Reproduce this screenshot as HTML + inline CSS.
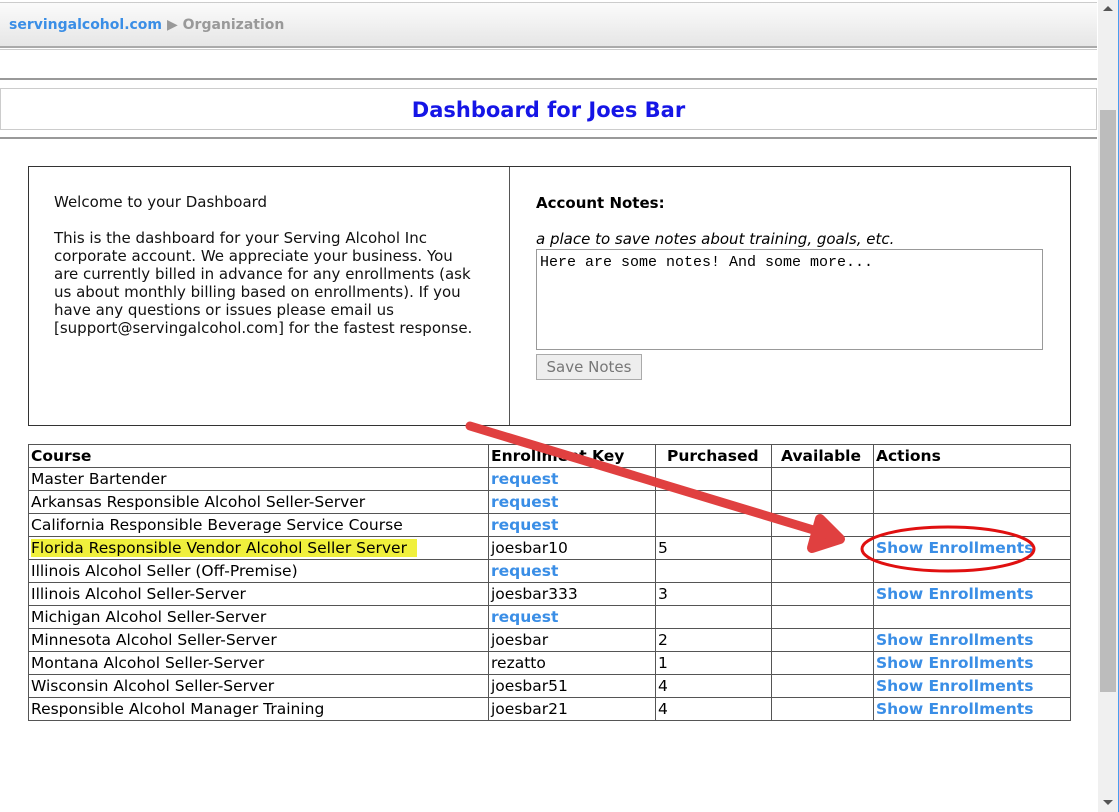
<!DOCTYPE html>
<html><head><style>
body{margin:0;width:1119px;height:812px;overflow:hidden;background:#fff;font-family:"DejaVu Sans","Liberation Sans",sans-serif;position:relative}
.bar{position:absolute;left:0;top:2px;width:1097px;height:43px;background:linear-gradient(#fbfbfb,#e6e6e6);border-bottom:2px solid #aaa;border-top:1px solid #ccc}
.bar span{position:absolute;top:14px;font-size:14px;font-weight:bold}
.sb{position:absolute;left:1098px;top:0;width:20px;height:812px;background:#f0f0f0;border-right:1px solid #4a9cf0}
.thumb{position:absolute;left:2px;top:110px;width:16px;height:582px;background:#bcbcbc}
.ln{position:absolute;left:0;width:1097px;border-top:1px solid #ccc}
.box{position:absolute;left:28px;top:166px;width:1041px;height:258px;border:1px solid #333}
table{position:absolute;left:28px;top:444px;border-collapse:collapse;font-size:15.5px;width:1043px;table-layout:fixed}
td,th{border:1px solid #555;height:22px;padding:0 0 0 2px;text-align:left;white-space:nowrap;overflow:visible}
th{font-weight:bold}
a{color:#3a8ee6;font-weight:bold;text-decoration:none}
</style></head><body>
<div class="bar"><span style="left:9px;color:#3a8ee6">servingalcohol.com</span><span style="left:167px;color:#999">▶ Organization</span></div>
<div class="ln" style="top:49px"></div>
<div class="ln" style="top:78px;border-top:2px solid #999"></div>
<div style="position:absolute;left:0;top:88px;width:1095px;height:40px;border:1px solid #ccc;text-align:center;font-size:21px;font-weight:bold;color:#1515e6;line-height:42px">Dashboard for Joes Bar</div>
<div class="ln" style="top:137px;border-top:2px solid #999"></div>
<div class="box">
<div style="position:absolute;left:480px;top:0;height:258px;border-left:1px solid #555"></div>
<div style="position:absolute;left:25px;top:26px;width:425px;font-size:15px;line-height:18px;color:#111">Welcome to your Dashboard<br><br>This is the dashboard for your Serving Alcohol Inc corporate account. We appreciate your business. You are currently billed in advance for any enrollments (ask us about monthly billing based on enrollments). If you have any questions or issues please email us [support@servingalcohol.com] for the fastest response.</div>
<div style="position:absolute;left:507px;top:27px;font-size:15px;font-weight:bold">Account Notes:</div>
<div style="position:absolute;left:507px;top:63px;font-size:15px;font-style:italic">a place to save notes about training, goals, etc.</div>
<div style="position:absolute;left:507px;top:82px;border:1px solid #999;font-family:'Liberation Mono',monospace;font-size:15px;padding:4px 3px;box-sizing:border-box;width:507px;height:101px">Here are some notes! And some more...</div>
<div style="position:absolute;left:507px;top:187px;width:104px;height:24px;border:1px solid #aaa;background:#eee;color:#777;font-size:15px;text-align:center;line-height:24px">Save Notes</div>
</div>
<table>
<colgroup><col style="width:460px"><col style="width:167px"><col style="width:116px"><col style="width:102px"><col></colgroup>
<tr><th>Course</th><th>Enrollment Key</th><th style="padding-left:11px">Purchased</th><th style="padding-left:9px">Available</th><th>Actions</th></tr>
<tr><td>Master Bartender</td><td><a>request</a></td><td></td><td></td><td></td></tr>
<tr><td>Arkansas Responsible Alcohol Seller-Server</td><td><a>request</a></td><td></td><td></td><td></td></tr>
<tr><td>California Responsible Beverage Service Course</td><td><a>request</a></td><td></td><td></td><td></td></tr>
<tr><td><span style="background:#f0f03c;padding:0 10px 0 0">Florida Responsible Vendor Alcohol Seller Server</span></td><td>joesbar10</td><td>5</td><td></td><td><a>Show Enrollments</a></td></tr>
<tr><td>Illinois Alcohol Seller (Off-Premise)</td><td><a>request</a></td><td></td><td></td><td></td></tr>
<tr><td>Illinois Alcohol Seller-Server</td><td>joesbar333</td><td>3</td><td></td><td><a>Show Enrollments</a></td></tr>
<tr><td>Michigan Alcohol Seller-Server</td><td><a>request</a></td><td></td><td></td><td></td></tr>
<tr><td>Minnesota Alcohol Seller-Server</td><td>joesbar</td><td>2</td><td></td><td><a>Show Enrollments</a></td></tr>
<tr><td>Montana Alcohol Seller-Server</td><td>rezatto</td><td>1</td><td></td><td><a>Show Enrollments</a></td></tr>
<tr><td>Wisconsin Alcohol Seller-Server</td><td>joesbar51</td><td>4</td><td></td><td><a>Show Enrollments</a></td></tr>
<tr><td>Responsible Alcohol Manager Training</td><td>joesbar21</td><td>4</td><td></td><td><a>Show Enrollments</a></td></tr>
</table>
<svg style="position:absolute;left:0;top:0" width="1098" height="812">
<line x1="470" y1="426" x2="830" y2="535" stroke="#e04040" stroke-width="9" stroke-linecap="round"/>
<polygon points="812,548 840,539 820,519" fill="#e04040" stroke="#e04040" stroke-width="10" stroke-linejoin="round"/>
<ellipse cx="948" cy="549" rx="86" ry="22" fill="none" stroke="#e01010" stroke-width="3"/>
</svg>
<div class="sb"><div class="thumb"></div>
<div style="position:absolute;left:5px;top:6px;border:5px solid transparent;border-bottom:5px solid #555;border-top:0"></div>
<div style="position:absolute;left:5px;top:800px;border:5px solid transparent;border-top:5px solid #555;border-bottom:0"></div></div>
</body></html>
